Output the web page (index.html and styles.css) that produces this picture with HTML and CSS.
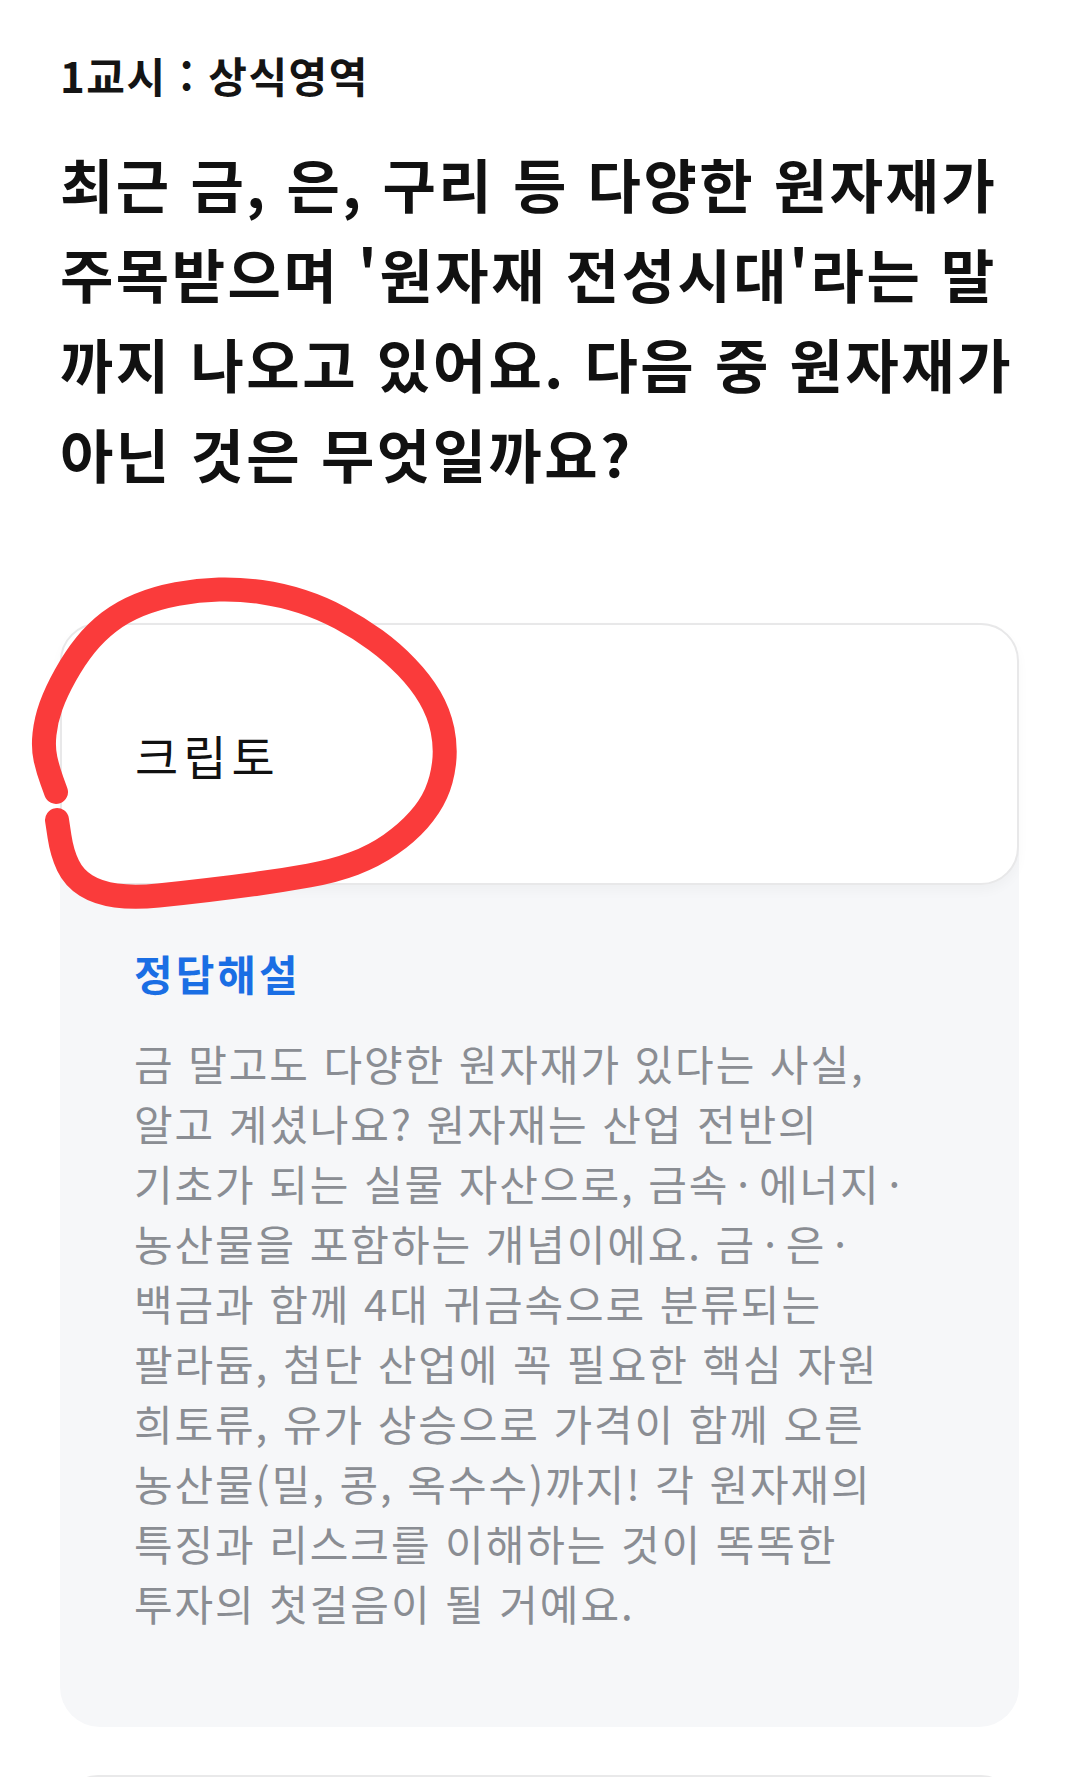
FILE: index.html
```html
<!DOCTYPE html>
<html lang="ko">
<head>
<meta charset="utf-8">
<title>1교시 : 상식영역</title>
<link rel="stylesheet" href="styles.css">
</head>
<body>
<main class="page">
  <h2 class="session">1교시 : 상식영역</h2>
  <h1 class="question">최근 금, 은, 구리 등 다양한 원자재가<br>주목받으며 '원자재 전성시대'라는 말<br>까지 나오고 있어요. 다음 중 원자재가<br>아닌 것은 무엇일까요?</h1>

  <section class="panel">
    <div class="option">크립토</div>
    <svg class="scribble" width="500" height="400" viewBox="0 0 500 400" aria-hidden="true">
      <path d="M56 252 L52 241 Q48 230 45.5 219 Q43 208 44.5 194 Q46 180 51 166 Q56 152 65.5 135 Q75 118 85.5 105 Q96 92 109 82 Q122 72 139 65 Q156 58 177 54 Q198 50 219 49.5 Q240 49 261 52 Q282 55 302 61.5 Q322 68 340.5 78 Q359 88 375.5 100 Q392 112 406.5 127 Q421 142 430 157.5 Q439 173 442.5 190 Q446 207 444 223.5 Q442 240 436 253.5 Q430 267 418.5 280 Q407 293 390.5 304.5 Q374 316 354 323.5 Q334 331 309 335.5 Q284 340 258.5 343.5 Q233 347 208 350 Q183 353 158.5 355.5 Q134 358 116 355.5 Q98 353 86 345.5 Q74 338 68 325.5 Q62 313 59.5 296.5 L57 280" />
    </svg>
    <div class="explain">
      <h3 class="explain-title">정답해설</h3>
      <p class="explain-body">금 말고도 다양한 원자재가 있다는 사실,<br>알고 계셨나요? 원자재는 산업 전반의<br>기초가 되는 실물 자산으로, 금속<span class="mid">·</span>에너지<span class="mid">·</span><br>농산물을 포함하는 개념이에요. 금<span class="mid">·</span>은<span class="mid">·</span><br>백금과 함께 4대 귀금속으로 분류되는<br>팔라듐, 첨단 산업에 꼭 필요한 핵심 자원<br>희토류, 유가 상승으로 가격이 함께 오른<br>농산물(밀, 콩, 옥수수)까지! 각 원자재의<br>특징과 리스크를 이해하는 것이 똑똑한<br>투자의 첫걸음이 될 거예요.</p>
    </div>
  </section>

  <div class="next-card"></div>
</main>
</body>
</html>
```

FILE: styles.css
```css
* { box-sizing: border-box; }

html, body {
  margin: 0;
  padding: 0;
  background: #ffffff;
}

body {
  font-family: "Noto Sans CJK KR", "Noto Sans", sans-serif;
  color: #111111;
}

.page {
  padding: 45px 60px 0;
}

.session {
  margin: 0;
  font-size: 42px;
  line-height: 60px;
  font-weight: 600;
  letter-spacing: 1.5px;
  color: #141414;
}

.question {
  margin: 33px 0 0;
  font-size: 58px;
  line-height: 90px;
  font-weight: 700;
  letter-spacing: 2.5px;
  color: #111111;
  white-space: nowrap;
}

.panel {
  position: relative;
  margin-top: 125px;
  background: #f6f7f9;
  border-radius: 40px;
  padding-bottom: 94px;
}

.option {
  height: 262px;
  display: flex;
  align-items: center;
  padding-left: 73px;
  background: #ffffff;
  border: 2px solid #e8e8e9;
  border-radius: 38px;
  box-shadow: 0 6px 12px rgba(0, 0, 0, 0.03);
  font-size: 47px;
  font-weight: 400;
  letter-spacing: 5px;
  color: #111111;
}

.scribble {
  position: absolute;
  left: -60px;
  top: -83px;
  overflow: visible;
  pointer-events: none;
}

.scribble path {
  fill: none;
  stroke: #fa3b3b;
  stroke-width: 24;
  stroke-linecap: round;
  stroke-linejoin: round;
}

.explain {
  padding: 58px 73px 0 74px;
}

.explain-title {
  margin: 0;
  font-size: 42px;
  line-height: 60px;
  font-weight: 700;
  letter-spacing: 3px;
  color: #1a6ee4;
}

.explain-body {
  margin: 30px 0 0;
  font-size: 42px;
  line-height: 60px;
  font-weight: 400;
  letter-spacing: 1.9px;
  color: #8a8d93;
  white-space: nowrap;
}

.mid {
  margin: 0 8px;
}

.next-card {
  margin-top: 48px;
  height: 80px;
  border-top: 2px solid #e9e9ea;
  border-radius: 38px 38px 0 0;
}
```
